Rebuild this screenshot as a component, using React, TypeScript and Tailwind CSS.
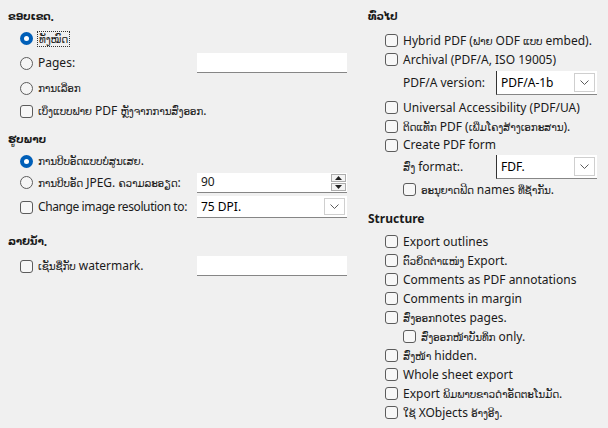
import React from "react";

const font = { fontFamily: '"Noto Sans", "DejaVu Sans", sans-serif' };

// Lao runs come out of DejaVu Sans a size too big next to the Latin text, so shrink them a little
function T({ s }: { s: string }) {
  const parts = s.split(/([\u0E80-\u0EFF]+)/);
  return (
    <>
      {parts.map((p, i) =>
        /[\u0E80-\u0EFF]/.test(p) ? (
          <span key={i} className="text-[10.5px] tracking-[-0.2px]">{p}</span>
        ) : (
          <React.Fragment key={i}>{p}</React.Fragment>
        )
      )}
    </>
  );
}

function Radio({ checked }: { checked?: boolean }) {
  return checked ? (
    <span className="w-[13px] h-[13px] rounded-full bg-[#005fb8] flex items-center justify-center shrink-0">
      <span className="w-[5px] h-[5px] rounded-full bg-white" />
    </span>
  ) : (
    <span className="w-[13px] h-[13px] rounded-full border border-[#5c5c5c] bg-[#f5f5f5] shrink-0" />
  );
}

function Check() {
  return <span className="w-[13px] h-[13px] rounded-[3px] border border-[#5c5c5c] bg-[#f7f7f7] shrink-0" />;
}

function Chevron() {
  return (
    <svg width="9" height="5" viewBox="0 0 9 5" className="text-[#5c5c5c]">
      <path d="M0.5 0.5 L4.5 4.5 L8.5 0.5" fill="none" stroke="currentColor" strokeWidth="1" />
    </svg>
  );
}

function Combo({ value, w, edge }: { value: string; w: string; edge?: boolean }) {
  return (
    <div className={`${w} h-full bg-white border-b border-[#868686] flex items-stretch ${edge ? "border-l border-l-[#333]" : ""}`}>
      <span className="flex-1 flex items-center pl-1 text-[#000]">{value}</span>
      <span className="w-[21px] my-[2px] mr-[2px] border border-[#cfcfcf] flex items-center justify-center">
        <Chevron />
      </span>
    </div>
  );
}

function Header({ children, className = "" }: { children: React.ReactNode; className?: string }) {
  return <div className={`h-[20px] flex items-center font-bold ${className}`}>{children}</div>;
}

function Row({ h, className = "", children }: { h: string; className?: string; children: React.ReactNode }) {
  return <div className={`${h} flex items-center gap-[5px] ${className}`}>{children}</div>;
}

export default function App() {
  const structure = [
    { t: "Export outlines" },
    { t: "ຕົວຍຶດຕຳແໜ່ງ Export." },
    { t: "Comments as PDF annotations" },
    { t: "Comments in margin" },
    { t: "ສົ່ງອອກnotes pages." },
    { t: "ສົ່ງອອກໜ້າບັນທຶກ only.", indent: true },
    { t: "ສົ່ງໜ້າ hidden." },
    { t: "Whole sheet export" },
    { t: "Export ພິມພາບຂາວດຳອັດຕະໂນມັດ." },
    { t: "ໃຊ້ XObjects ອ້າງອີງ." },
  ];

  return (
    <div className="w-[608px] h-[428px] bg-[#f0f0f0] text-[12px] text-[#1a1a1a] flex overflow-hidden" style={font}>
      {/* left column */}
      <div className="w-[360px] pl-[8px] pt-[7px] flex flex-col">
        <Header><T s="ຂອບເຂດ." /></Header>
        <Row h="h-[23px]" className="pl-[12px]">
          <Radio checked />
          <span className="outline-1 outline-dotted outline-[#333] px-[1px] leading-[14px]"><T s="ທັງໝົດ" /></span>
        </Row>
        <Row h="h-[26px]" className="pl-[12px]">
          <Radio />
          <span className="w-[154px] shrink-0">Pages:</span>
          <div className="w-[150px] h-[20px] bg-white border-b border-[#868686]" />
        </Row>
        <Row h="h-[24px]" className="pl-[12px]">
          <Radio />
          <span><T s="ການເລືອກ" /></span>
        </Row>
        <Row h="h-[22px]" className="pl-[12px]">
          <Check />
          <span><T s="ເບິ່ງແບບຟາຍ PDF ຫຼັງຈາກການສົ່ງອອກ." /></span>
        </Row>

        <Header className="mt-[8px]"><T s="ຮູບພາບ" /></Header>
        <Row h="h-[22px]" className="pl-[12px]">
          <Radio checked />
          <span><T s="ການບີບອັດແບບບໍ່ສູນເສຍ." /></span>
        </Row>
        <Row h="h-[21px]" className="pl-[12px]">
          <Radio />
          <span className="w-[154px] shrink-0 whitespace-nowrap"><T s="ການບີບອັດ JPEG.  ຄວາມລະອຽດ:" /></span>
          <div className="w-[150px] h-[20px] bg-white border-b border-[#868686] flex items-stretch">
            <span className="flex-1 flex items-center pl-1">90</span>
            <span className="w-[15px] mr-[1px] flex flex-col justify-center gap-[1px] py-[1px]">
              <span className="flex-1 border border-[#adadad] bg-[#f4f4f4] flex items-center justify-center">
                <svg width="7" height="4" viewBox="0 0 7 4"><path d="M0 4 L3.5 0 L7 4 Z" fill="#222" /></svg>
              </span>
              <span className="flex-1 border border-[#adadad] bg-[#f4f4f4] flex items-center justify-center">
                <svg width="7" height="4" viewBox="0 0 7 4"><path d="M0 0 L3.5 4 L7 0 Z" fill="#222" /></svg>
              </span>
            </span>
          </div>
        </Row>
        <Row h="h-[24px]" className="pl-[12px] mt-[2px]">
          <Check />
          <span className="w-[154px] shrink-0 whitespace-nowrap tracking-[-0.4px]">Change image resolution to:</span>
          <div className="h-[22px]">
            <Combo value="75 DPI." w="w-[150px]" />
          </div>
        </Row>

        <Header className="mt-[13px]"><T s="ລາຍນ້ຳ." /></Header>
        <Row h="h-[22px]" className="pl-[12px] mt-[3px]">
          <Check />
          <span className="w-[154px] shrink-0"><T s="ເຊັນຊື່ກັບ watermark." /></span>
          <div className="w-[150px] h-[20px] bg-white border-b border-[#868686]" />
        </Row>
      </div>

      {/* right column */}
      <div className="flex-1 pl-[8px] pt-[7px] flex flex-col">
        <Header><T s="ທົ່ວໄປ" /></Header>
        <Row h="h-[19px]" className="pl-[17px] mt-[4px]">
          <Check />
          <span className="whitespace-nowrap"><T s="Hybrid PDF (ຟາຍ ODF ແບບ embed)." /></span>
        </Row>
        <Row h="h-[19px]" className="pl-[17px]">
          <Check />
          <span>Archival (PDF/A, ISO 19005)</span>
        </Row>
        <div className="h-[24px] mt-[2px] pl-[35px] flex items-center">
          <span className="w-[93px]">PDF/A version:</span>
          <div className="h-[24px]">
            <Combo value="PDF/A-1b" w="w-[101px]" edge />
          </div>
        </div>
        <Row h="h-[19px]" className="pl-[17px] mt-[3px]">
          <Check />
          <span className="whitespace-nowrap">Universal Accessibility (PDF/UA)</span>
        </Row>
        <Row h="h-[19px]" className="pl-[17px]">
          <Check />
          <span className="whitespace-nowrap"><T s="ຕິດແທັກ PDF (ເພີ່ມໂຄງສ້າງເອກະສານ)." /></span>
        </Row>
        <Row h="h-[18px]" className="pl-[17px]">
          <Check />
          <span>Create PDF form</span>
        </Row>
        <div className="h-[24px] mt-[1px] pl-[35px] flex items-center">
          <span className="w-[93px]"><T s="ສົ່ງ format:." /></span>
          <div className="h-[24px]">
            <Combo value="FDF." w="w-[101px]" edge />
          </div>
        </div>
        <Row h="h-[21px]" className="pl-[35px]">
          <Check />
          <span className="whitespace-nowrap"><T s="ອະນຸຍາດຟິດ names ທີ່ຊ້ຳກັນ." /></span>
        </Row>

        <Header className="mt-[9px]">Structure</Header>
        <div className="mt-[3px] flex flex-col">
          {structure.map((s) => (
            <Row key={s.t} h="h-[19px]" className={s.indent ? "pl-[35px]" : "pl-[17px]"}>
              <Check />
              <span className="whitespace-nowrap"><T s={s.t} /></span>
            </Row>
          ))}
        </div>
      </div>
    </div>
  );
}
